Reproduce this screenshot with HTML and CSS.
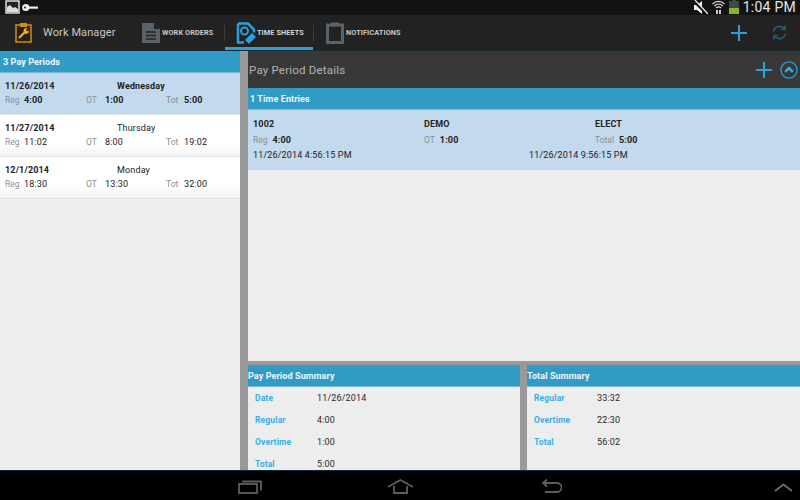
FILE: index.html
```
<!DOCTYPE html>
<html lang="en">
<head>
<meta charset="utf-8">
<title>Work Manager</title>
<link rel="stylesheet" href="styles.css">
</head>
<body>
<div class="app">
  <div class="status">
    <div class="status-left">
      <svg class="ic" width="15" height="15" viewBox="0 0 15 15"><rect x="1" y="1" width="13" height="12" fill="#222" stroke="#ddd" stroke-width="1.5"/><path d="M2 12V7l3-2 3 3 2-1 3 2v3z" fill="#ddd"/></svg>
      <svg class="ic key" width="16" height="15" viewBox="0 0 16 15"><circle cx="3.8" cy="7.5" r="3.6" fill="#eee"/><rect x="6" y="6.5" width="10" height="2.2" fill="#eee"/><circle cx="3" cy="7.500" r="1" fill="#222"/></svg>
    </div>
    <div class="status-right">
      <svg width="14" height="15" viewBox="0 0 14 15"><path d="M0 5h3l5-4v13l-5-4H0z" fill="#eee"/><path d="M0 1l13 13" stroke="#111" stroke-width="3"/><path d="M1 0l13 14" stroke="#eee" stroke-width="1.200"/></svg>
      <svg width="13" height="15" viewBox="0 0 13 15" fill="none" stroke="#ddd" stroke-width="1.100"><path d="M.5 4c3.500-3.500 8.500-3.500 12 0M2.300 6c2.500-2.500 6-2.500 8.500 0M4 8c1.500-1.500 3.500-1.500 5 0"/><path d="M5 10v4M8 10v4" stroke-width="1.800"/></svg>
      <svg width="10" height="15" viewBox="0 0 10 15"><rect x="3" y="0" width="4" height="2" fill="#444"/><rect y="1" width="10" height="7" fill="#444"/><rect y="8" width="10" height="6" fill="#8ab51e"/></svg>
      <span class="clock">1:04 PM</span>
    </div>
  </div>

  <div class="actionbar">
    <svg class="logo" width="17" height="21" viewBox="0 0 17 21"><rect x="1" y="3" width="15" height="17" fill="#222" stroke="#d58f0c" stroke-width="1.500"/><rect x="5" y="1" width="7" height="4" fill="#d58f0c"/><path d="M4 16l6-6" stroke="#f6ae1c" stroke-width="2.200"/><path d="M8.500 8.500l1-2 3-.5-1.500 2 1.500 1.500 1.500-1.500-.5 3-2.500 1-2-1z" fill="#f6ae1c"/></svg>
    <span class="app-title">Work Manager</span>
    <nav class="tabs">
      <div class="tab tab-first">
        <svg width="20" height="22" viewBox="0 0 20 22"><path d="M1 1h12l6 6v14H1z" fill="#59636b"/><path d="M13 1v6h6" fill="#222"/><path d="M5 10h10M5 13.500h10M5 17h10" stroke="#222" stroke-width="1.500"/></svg>
        <span>WORK ORDERS</span>
      </div>
      <div class="sep"></div>
      <div class="tab tab-active">
        <svg width="21" height="22" viewBox="0 0 21 22" fill="none"><path d="M2 1.500h10l6 6v3M2 1.500v19h6" stroke="#2ca0d8" stroke-width="2.500"/><circle cx="8.500" cy="9" r="3.500" stroke="#2ca0d8" stroke-width="2"/><path d="M9 18l7-7 4 4-7 7z" fill="#2ca0d8"/></svg>
        <span>TIME SHEETS</span>
      </div>
      <div class="sep"></div>
      <div class="tab tab-last">
        <svg width="18" height="22" viewBox="0 0 18 22"><rect x="1.500" y="3" width="15" height="17.500" fill="none" stroke="#59636b" stroke-width="3"/><rect x="5" y="0.500" width="8" height="4" fill="#59636b"/></svg>
        <span>NOTIFICATIONS</span>
      </div>
    </nav>
    <div class="actions">
      <svg width="16" height="16" viewBox="0 0 16 16"><path d="M8 0v16M0 8h16" stroke="#2ca0d8" stroke-width="2"/></svg>
      <svg width="15" height="15" viewBox="0 0 15 15" fill="none" stroke="#1f5f7d" stroke-width="1.600"><path d="M1.500 6.500A6 6 0 0 1 12 3.500M13.500 8.500A6 6 0 0 1 3 11.500"/><path d="M13 .500v4h-4M2 14.500v-4h4"/></svg>
    </div>
  </div>

  <div class="main">
    <aside class="left">
      <div class="band band-left">3 Pay Periods</div>
      <div class="period selected">
        <div class="p-line"><b class="p-date">11/26/2014</b><b class="p-day">Wednesday</b></div>
        <div class="p-line p-vals">
          <span class="lab lab1">Reg</span><b class="val val1">4:00</b>
          <span class="lab lab2">OT</span><b class="val val2">1:00</b>
          <span class="lab lab3">Tot</span><b class="val">5:00</b>
        </div>
      </div>
      <div class="period">
        <div class="p-line"><b class="p-date">11/27/2014</b><span class="p-day">Thursday</span></div>
        <div class="p-line p-vals">
          <span class="lab lab1">Reg</span><span class="val val1">11:02</span>
          <span class="lab lab2">OT</span><span class="val val2">8:00</span>
          <span class="lab lab3">Tot</span><span class="val">19:02</span>
        </div>
      </div>
      <div class="period">
        <div class="p-line"><b class="p-date">12/1/2014</b><span class="p-day">Monday</span></div>
        <div class="p-line p-vals">
          <span class="lab lab1">Reg</span><span class="val val1">18:30</span>
          <span class="lab lab2">OT</span><span class="val val2">13:30</span>
          <span class="lab lab3">Tot</span><span class="val">32:00</span>
        </div>
      </div>
    </aside>

    <section class="right">
      <div class="details-head">
        <span>Pay Period Details</span>
        <div class="details-actions">
          <svg width="16" height="16" viewBox="0 0 16 16"><path d="M8 0v16M0 8h16" stroke="#2ca0d8" stroke-width="2"/></svg>
          <svg width="18" height="18" viewBox="0 0 19 19" fill="none"><circle cx="9.500" cy="9.500" r="8.500" stroke="#2ca0d8" stroke-width="1.300"/><path d="M5.500 11.500l4-4 4 4" stroke="#35aee8" stroke-width="2.600"/></svg>
        </div>
      </div>
      <div class="band band-entries">1 Time Entries</div>
      <div class="entry">
        <div class="e-row e-top"><b class="e-a">1002</b><b class="e-b">DEMO</b><b>ELECT</b></div>
        <div class="e-row e-mid">
          <div class="e-a"><span class="lab e-lab">Reg</span><b class="val">4:00</b></div>
          <div class="e-b"><span class="lab e-lab">OT</span><b class="val">1:00</b></div>
          <div><span class="lab e-lab">Total</span><b class="val">5:00</b></div>
        </div>
        <div class="e-row e-bot"><span class="e-c">11/26/2014 4:56:15 PM</span><span>11/26/2014 9:56:15 PM</span></div>
      </div>
      <div class="spacer"></div>
      <div class="summaries">
        <div class="summary summary-pay">
          <div class="band band-sum">Pay Period Summary</div>
          <div class="s-row"><b class="s-lab">Date</b><span>11/26/2014</span></div>
          <div class="s-row"><b class="s-lab">Regular</b><span>4:00</span></div>
          <div class="s-row"><b class="s-lab">Overtime</b><span>1:00</span></div>
          <div class="s-row"><b class="s-lab">Total</b><span>5:00</span></div>
        </div>
        <div class="summary summary-total">
          <div class="band band-sum">Total Summary</div>
          <div class="s-row"><b class="s-lab">Regular</b><span>33:32</span></div>
          <div class="s-row"><b class="s-lab">Overtime</b><span>22:30</span></div>
          <div class="s-row"><b class="s-lab">Total</b><span>56:02</span></div>
        </div>
      </div>
    </section>
  </div>

  <div class="navbar">
    <svg class="nav-recent" width="24" height="15" viewBox="0 0 24 15" fill="none" stroke="#5e5e5e" stroke-width="1.800"><rect x="1" y="5" width="18" height="9"/><path d="M4 2.500h19v9"/></svg>
    <svg class="nav-home" width="27" height="15" viewBox="0 0 27 15" fill="none" stroke="#5e5e5e" stroke-width="1.800"><path d="M1 8l12.500-7L26 8M7 7v7h13V7"/></svg>
    <svg class="nav-back" width="21" height="15" viewBox="0 0 21 15" fill="none" stroke="#5e5e5e" stroke-width="1.800"><path d="M2 4h14a4 4 0 0 1 0 9H4"/><path d="M6 .500L2 4l4 3.500"/></svg>
    <svg class="nav-up" width="19" height="9" viewBox="0 0 19 9" fill="none" stroke="#6e6e6e" stroke-width="1.800"><path d="M1 8l8.500-6.500L18 8"/></svg>
  </div>
</div>
</body>
</html>
```
FILE: styles.css
```
* { box-sizing: border-box; }
html, body { margin: 0; padding: 0; }
body { width: 800px; height: 500px; overflow: hidden; font-family: Roboto, "Liberation Sans", sans-serif; font-size: 9px; color: #222; }
b { font-weight: 700; }
svg { display: block; flex: none; }

.app { width: 800px; height: 500px; display: flex; flex-direction: column; }

.status { height: 15px; flex: none; background: #131313; display: flex; justify-content: space-between; align-items: center; padding: 0 4px 0 5px; }
.status-left { display: flex; gap: 2px; align-items: center; }
.status-right { display: flex; align-items: center; gap: 4px; }
.clock { font-size: 14px; color: #e4e4e4; letter-spacing: 0.25px; line-height: 15px; }

.actionbar { height: 36px; flex: none; background: #222; display: flex; align-items: center; padding-left: 15px; border-bottom: 1px solid #1a2a33; }
.logo { margin-right: 11px; }
.app-title { font-size: 11px; color: #c9c9c9; width: 98px; letter-spacing: 0.1px; }
.tabs { display: flex; align-items: center; height: 100%; }
.tab { display: flex; align-items: center; height: 100%; gap: 1px; font-size: 7.300px; font-weight: 700; color: #c8c8c8; letter-spacing: 0.1px; }
.tab-first { width: 83px; padding-left: 0; }
.tab-active { width: 88px; padding-left: 11px; border-bottom: 3px solid #2ca0d8; padding-top: 3px; color: #d6d6d6; gap: 0; }
.tab-last { padding-left: 12px; gap: 2px; }
.sep { width: 1px; height: 16px; background: #3d3d3d; }
.actions { margin-left: auto; display: flex; align-items: center; gap: 25px; padding-right: 13px; }

.main { height: 419px; flex: none; display: flex; background: #ededed; }

.left { width: 240px; flex: none; background: #eee; }
.band { background: #319bc5; color: #eef6fa; font-size: 9px; font-weight: 700; display: flex; align-items: center; letter-spacing: 0.1px; border-bottom: 1px solid #7db7d2; }
.band-left { height: 22px; padding-left: 3px; }

.period { height: 42px; padding: 8px 5px 0; background: linear-gradient(#fff 70%, #f3f3f3); border-bottom: 1px solid #e2e2e2; font-size: 9px; color: #222; }
.period.selected { background: #c3d9ee; border-bottom: 1px solid #dbe4ec; }
.p-line { display: flex; line-height: 11px; letter-spacing: 0.15px; }
.p-date { width: 112px; }
.p-vals { margin-top: 3px; }
.lab { color: #8a8f93; font-size: 8.500px; letter-spacing: 0; }
.lab1 { width: 19px; }
.val1 { width: 62px; }
.lab2 { width: 19px; }
.val2 { width: 61px; }
.lab3 { width: 18px; }

.right { flex: 1; border-left: 8px solid #999; display: flex; flex-direction: column; min-width: 0; }
.details-head { height: 37px; flex: none; background: #383838; color: #b4b4b4; font-size: 11.500px; letter-spacing: 0.2px; display: flex; align-items: center; justify-content: space-between; padding-left: 1px; padding-right: 2px; }
.details-actions { display: flex; align-items: center; gap: 8px; }
.band-entries { height: 22px; flex: none; padding-left: 2px; padding-top: 1px; }

.entry { height: 60px; flex: none; background: #c3d9ee; padding: 9px 5px 0; font-size: 9px; }
.e-row { display: flex; line-height: 11px; letter-spacing: 0.15px; }
.e-a { width: 171px; }
.e-b { width: 171px; }
.e-c { width: 276px; }
.e-mid { margin-top: 5px; }
.e-bot { margin-top: 4px; }
.e-lab { margin-right: 5px; }

.spacer { flex: 1; }

.summaries { height: 109px; flex: none; border-top: 4px solid #999; display: flex; }
.summary { overflow: hidden; }
.summary-pay { width: 272px; flex: none; }
.summary-total { flex: 1; border-left: 7px solid #999; }
.band-sum { height: 22px; padding-top: 1px; }
.s-row { height: 22px; display: flex; align-items: center; padding-left: 7px; font-size: 9px; letter-spacing: 0.15px; color: #2a2a2a; }
.s-lab { width: 62px; color: #38aee6; font-size: 8.500px; }
.summary-total .s-lab { width: 63px; }

.navbar { flex: 1; background: #000; border-top: 1px solid #14263a; position: relative; }
.navbar svg { position: absolute; }
.nav-recent { left: 238px; top: 8px; }
.nav-home { left: 387px; top: 8px; }
.nav-back { left: 541px; top: 8px; }
.nav-up { left: 774px; top: 12px; }
```
